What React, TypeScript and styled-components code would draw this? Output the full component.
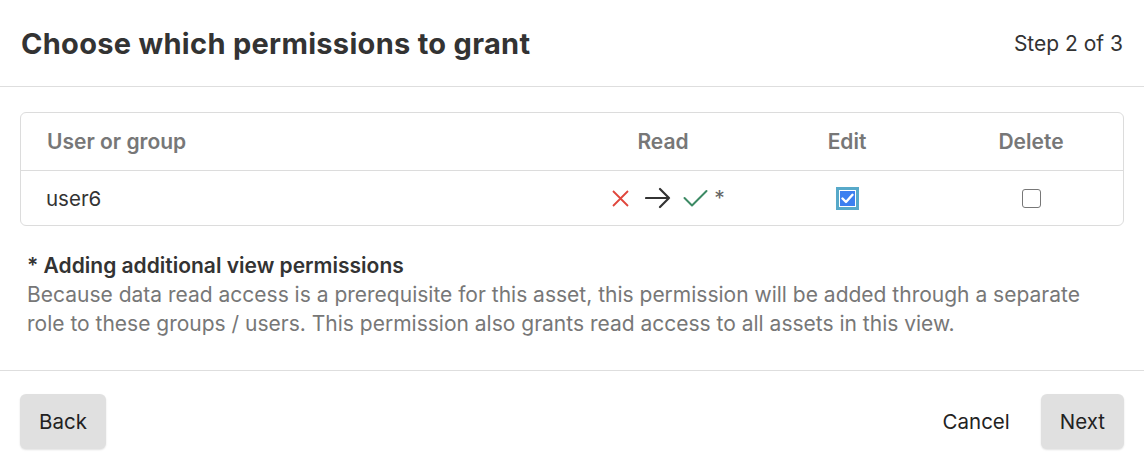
import React, { FC } from "react";
import styled, { createGlobalStyle } from "styled-components";

const GlobalStyle = createGlobalStyle`
  body {
    margin: 0;
    background: #fff;
    font-family: Inter, "Noto Sans", sans-serif;
    color: #333;
  }
`;

const Dialog = styled.div`
  width: 1144px;
  height: 466px;
  display: flex;
  flex-direction: column;
  background: #fff;
`;

const Header = styled.div`
  height: 86px;
  display: flex;
  align-items: center;
  justify-content: space-between;
  padding: 0 21px;
  border-bottom: 1px solid #dedede;
`;

const Title = styled.h1`
  margin: 0;
  font-size: 29px;
  font-weight: 700;
  color: #333;
  letter-spacing: 0.3px;
`;

const StepText = styled.span`
  font-size: 21px;
  color: #333;
`;

const Body = styled.div`
  padding: 25px 20px 0 20px;
  height: 258px;
  border-bottom: 1px solid #dedede;
`;

const Table = styled.div`
  border: 1px solid #dcdcdc;
  border-radius: 6px;
`;

const Row = styled.div<{ $head?: boolean }>`
  display: grid;
  grid-template-columns: 1fr 184px 184px 184px;
  align-items: center;
  height: ${(p) => (p.$head ? "57px" : "54px")};
  border-bottom: ${(p) => (p.$head ? "1px solid #dcdcdc" : "none")};
`;

const HeadCell = styled.div<{ $left?: boolean }>`
  font-size: 21px;
  font-weight: 600;
  color: #777;
  text-align: ${(p) => (p.$left ? "left" : "center")};
  padding-left: ${(p) => (p.$left ? "26px" : "0")};
`;

const NameCell = styled.div`
  font-size: 20.5px;
  color: #333;
  padding-left: 25px;
`;

const IconCell = styled.div`
  display: flex;
  align-items: center;
  justify-content: center;
`;

const ReadChange = styled.div`
  display: flex;
  align-items: center;
  gap: 11px;
  margin-left: 10px;

  & > svg:first-child {
    margin-right: 4px;
  }
`;

const Asterisk = styled.span`
  font-size: 21px;
  color: #666;
  margin-left: -5px;
  margin-top: 1px;
`;

const CheckBox = styled.span<{ $checked?: boolean }>`
  box-sizing: border-box;
  width: ${(p) => (p.$checked ? "23px" : "19px")};
  height: ${(p) => (p.$checked ? "23px" : "19px")};
  display: flex;
  align-items: center;
  justify-content: center;
  border-radius: ${(p) => (p.$checked ? "0" : "3px")};
  border: ${(p) => (p.$checked ? "3px solid #57a9c9" : "1.5px solid #777")};
  background: ${(p) => (p.$checked ? "#3c7ff0" : "#fff")};
  box-shadow: ${(p) => (p.$checked ? "inset 0 0 0 1px #fff" : "none")};
`;

const Note = styled.div`
  padding: 26px 7px 0 7px;
`;

const NoteTitle = styled.div`
  font-size: 21px;
  font-weight: 600;
  color: #333;
  line-height: 28px;
`;

const NoteText = styled.p`
  margin: 0;
  font-size: 21px;
  color: #777;
  line-height: 29px;
`;

const Footer = styled.div`
  flex: 1;
  display: flex;
  align-items: center;
  justify-content: space-between;
  padding: 0 20px;
`;

const Actions = styled.div`
  display: flex;
  align-items: center;
  gap: 12px;
`;

const Button = styled.button<{ $ghost?: boolean }>`
  height: 55px;
  padding: 0 19px;
  font-family: Inter, "Noto Sans", sans-serif;
  font-size: 20.5px;
  color: #222;
  border: none;
  border-radius: 6px;
  background: ${(p) => (p.$ghost ? "transparent" : "#e0e0e0")};
  box-shadow: ${(p) => (p.$ghost ? "none" : "0 1px 2px rgba(0,0,0,0.12)")};
  margin-top: 5px;
`;

const Cross: FC = () => (
  <svg width="19" height="19" viewBox="0 0 19 19">
    <path d="M2 2 L17 17 M17 2 L2 17" stroke="#e0463c" strokeWidth="1.8" fill="none" />
  </svg>
);

const Arrow: FC = () => (
  <svg width="27" height="22" viewBox="0 0 27 22">
    <path d="M1 11 H24 M15 2 L24 11 L15 20" stroke="#333" strokeWidth="2.2" fill="none" strokeLinecap="round" strokeLinejoin="round" />
  </svg>
);

const Tick: FC = () => (
  <svg width="25" height="19" viewBox="0 0 25 19">
    <path d="M1.5 9 L9 16.5 L23.5 2" stroke="#3c8a64" strokeWidth="2" fill="none" strokeLinecap="round" strokeLinejoin="round" />
  </svg>
);

const SmallTick: FC = () => (
  <svg width="13" height="11" viewBox="0 0 13 11">
    <path d="M1.5 5.5 L5 9 L11.5 1.8" stroke="#fff" strokeWidth="2.4" fill="none" strokeLinecap="round" strokeLinejoin="round" />
  </svg>
);

const App: FC = () => {
  return (
    <Dialog>
      <GlobalStyle />
      <Header>
        <Title>Choose which permissions to grant</Title>
        <StepText>Step 2 of 3</StepText>
      </Header>
      <Body>
        <Table>
          <Row $head>
            <HeadCell $left>User or group</HeadCell>
            <HeadCell>Read</HeadCell>
            <HeadCell>Edit</HeadCell>
            <HeadCell>Delete</HeadCell>
          </Row>
          <Row>
            <NameCell>user6</NameCell>
            <IconCell>
              <ReadChange>
                <Cross />
                <Arrow />
                <Tick />
                <Asterisk>*</Asterisk>
              </ReadChange>
            </IconCell>
            <IconCell>
              <CheckBox $checked>
                <SmallTick />
              </CheckBox>
            </IconCell>
            <IconCell>
              <CheckBox />
            </IconCell>
          </Row>
        </Table>
        <Note>
          <NoteTitle>* Adding additional view permissions</NoteTitle>
          <NoteText>
            Because data read access is a prerequisite for this asset, this permission will be added through a separate
            role to these groups / users. This permission also grants read access to all assets in this view.
          </NoteText>
        </Note>
      </Body>
      <Footer>
        <Button>Back</Button>
        <Actions>
          <Button $ghost>Cancel</Button>
          <Button>Next</Button>
        </Actions>
      </Footer>
    </Dialog>
  );
};

export default App;
